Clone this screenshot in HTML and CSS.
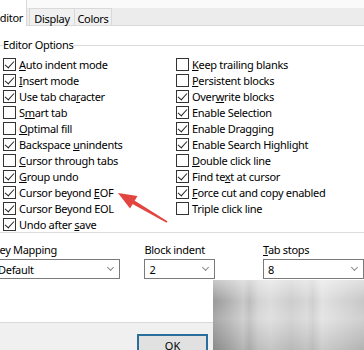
FILE: index.html
```html
<!DOCTYPE html>
<html lang="en">
<head>
  <meta charset="UTF-8">
  <title>Editor Options</title>
  <link rel="stylesheet" href="styles.css">
</head>
<body>

<div class="tabs">
  <div class="tab active">Editor</div>
  <div class="tab display">Display</div>
  <div class="tab colors">Colors</div>
</div>

<div class="page">
  <fieldset class="options">
    <legend>Editor Options</legend>
    <div class="cols">
      <ul class="col">
        <li class="on"><span class="box"></span><span><u>A</u>uto indent mode</span></li>
        <li class="on"><span class="box"></span><span><u>I</u>nsert mode</span></li>
        <li class="on"><span class="box"></span><span>Use tab cha<u>r</u>acter</span></li>
        <li><span class="box"></span><span>S<u>m</u>art tab</span></li>
        <li><span class="box"></span><span><u>O</u>ptimal fill</span></li>
        <li class="on"><span class="box"></span><span>Backspace <u>u</u>nindents</span></li>
        <li><span class="box"></span><span><u>C</u>ursor through tabs</span></li>
        <li class="on"><span class="box"></span><span><u>G</u>roup undo</span></li>
        <li class="on"><span class="box"></span><span>Cursor beyond <u>E</u>OF</span></li>
        <li class="on"><span class="box"></span><span>Cursor Beyond EOL</span></li>
        <li class="on"><span class="box"></span><span>Undo after <u>s</u>ave</span></li>
      </ul>
      <ul class="col">
        <li><span class="box"></span><span><u>K</u>eep trailing blanks</span></li>
        <li><span class="box"></span><span><u>P</u>ersistent blocks</span></li>
        <li class="on"><span class="box"></span><span>Over<u>w</u>rite blocks</span></li>
        <li class="on"><span class="box"></span><span>Enable Selection</span></li>
        <li class="on"><span class="box"></span><span>Enable Dragging</span></li>
        <li class="on"><span class="box"></span><span>Enable Search Highlight</span></li>
        <li><span class="box"></span><span><u>D</u>ouble click line</span></li>
        <li class="on"><span class="box"></span><span>Find te<u>x</u>t at cursor</span></li>
        <li class="on"><span class="box"></span><span><u>F</u>orce cut and copy enabled</span></li>
        <li><span class="box"></span><span>Triple click line</span></li>
      </ul>
    </div>
  </fieldset>

  <div class="fields">
    <div class="field keymap">
      <label>Key Mapping</label>
      <div class="combo"><span>Default</span><span class="chev"></span></div>
    </div>
    <div class="field indent">
      <label>Block indent</label>
      <div class="combo"><span>2</span><span class="chev"></span></div>
    </div>
    <div class="field stops">
      <label><u>T</u>ab stops</label>
      <div class="combo"><span>8</span><span class="chev"></span></div>
    </div>
  </div>
</div>

<div class="footer">
  <button class="ok">OK</button>
</div>

<!-- blurred patch over the bottom right corner -->
<div class="smudge"></div>

<!-- red pointer arrow -->
<svg class="arrow" width="364" height="350" viewBox="0 0 364 350">
  <polygon points="134,200.3 132,203.7 166.6,222.7 167.4,221.3" fill="#e2453f"/>
  <polygon points="118,193 137.5,196 130,208.5" fill="#e2453f"/>
</svg>

</body>
</html>
```

FILE: styles.css
```css
* {
  box-sizing: border-box;
}
html, body {
  margin: 0;
}
body {
  width: 364px;
  height: 350px;
  overflow: hidden;
  position: relative;
  background: #f0f0f0;
  font-family: "Noto Sans", sans-serif;
  font-size: 11px;
  letter-spacing: -0.3px;
  color: #000;
}

/* tab strip */
.tabs {
  display: flex;
  align-items: flex-end;
  height: 25px;
  background: linear-gradient(#fafafa 0 8px, #ececec 8px);
}
.tab {
  height: 17px;
  line-height: 19px;
  border: 1px solid #d9d9d9;
  border-bottom: none;
  background: #f0f0f0;
  text-align: center;
}
.tab.active {
  width: 39px;
  height: 26px;
  line-height: 19px;
  margin-left: -12px;
  margin-bottom: -1px;
  padding: 8px 0 0 5px;
  text-align: left;
  background: #fff;
  border-top: none;
  position: relative;
  z-index: 1;
}
.tab.display {
  width: 46px;
  margin-left: 2px;
}
.tab.colors {
  width: 38px;
  margin-left: -1px;
}

/* white page */
.page {
  height: 298px;
  background: #fff;
  border-top: 1px solid #d9d9d9;
  border-bottom: 1px solid #dadada;
}
.options {
  margin: 12px 0 0 -10px;
  padding: 4px 0 0 12px;
  width: 420px;
  min-width: 0;
  border: 1px solid #dcdcdc;
}
.options legend {
  padding: 0;
  line-height: 14px;
}
.cols {
  display: flex;
}
.col {
  list-style: none;
  margin: 0;
  padding: 0;
  width: 173px;
}
.col li {
  display: flex;
  align-items: center;
  height: 16px;
  white-space: nowrap;
}
.box {
  width: 13px;
  height: 13px;
  margin-right: 3px;
  border: 1px solid #333;
  background: #fff;
  display: flex;
  align-items: center;
  justify-content: center;
  flex-shrink: 0;
}
.on .box::after {
  content: "";
  width: 8px;
  height: 4px;
  margin-top: -2px;
  border-left: 1px solid #222;
  border-bottom: 1px solid #222;
  transform: rotate(-48deg);
}

/* combos under the group */
.fields {
  display: flex;
  margin: 10px 0 0 -7px;
}
.field label {
  display: block;
  line-height: 14px;
  white-space: nowrap;
}
.combo {
  margin-top: 2px;
  height: 20px;
  border: 1px solid #7a7a7a;
  background: #fff;
  padding-left: 4px;
  display: flex;
  align-items: center;
  justify-content: space-between;
}
.chev {
  width: 5px;
  height: 5px;
  margin: -3px 6px 0 0;
  border-right: 1px solid #8a8a8a;
  border-bottom: 1px solid #8a8a8a;
  transform: rotate(45deg);
}
.keymap {
  width: 130px;
}
.indent {
  width: 72px;
  margin-left: 24px;
}
.stops {
  width: 103px;
  margin-left: 48px;
}

/* button bar */
.footer {
  padding: 11px 0 0 137px;
}
.ok {
  width: 71px;
  height: 23px;
  padding: 0;
  font: inherit;
  color: #000;
  background: #e1e1e1;
  border: 1px solid #2a6f9c;
  box-shadow: inset 0 0 0 1px #2a6f9c;
}

.smudge {
  position: absolute;
  left: 213px;
  top: 280px;
  right: 0;
  bottom: 0;
  background:
    linear-gradient(rgba(255, 255, 255, 0.45), rgba(255, 255, 255, 0) 30%, rgba(255, 255, 255, 0.15) 55%, rgba(0, 0, 0, 0.1)),
    linear-gradient(90deg, rgba(0, 0, 0, 0) 0 20%, rgba(0, 0, 0, 0.08) 24%, rgba(0, 0, 0, 0) 30%, rgba(0, 0, 0, 0) 62%, rgba(0, 0, 0, 0.06) 66%, rgba(0, 0, 0, 0) 72%),
    linear-gradient(90deg, #9a9a9a 0, #b0b0b0 10%, #c8c8c8 20%, #dbdbdb 38%, #cdcdcd 52%, #e1e1e1 72%, #c7c7c7 100%);
}
.arrow {
  position: absolute;
  left: 0;
  top: 0;
  pointer-events: none;
}
```
